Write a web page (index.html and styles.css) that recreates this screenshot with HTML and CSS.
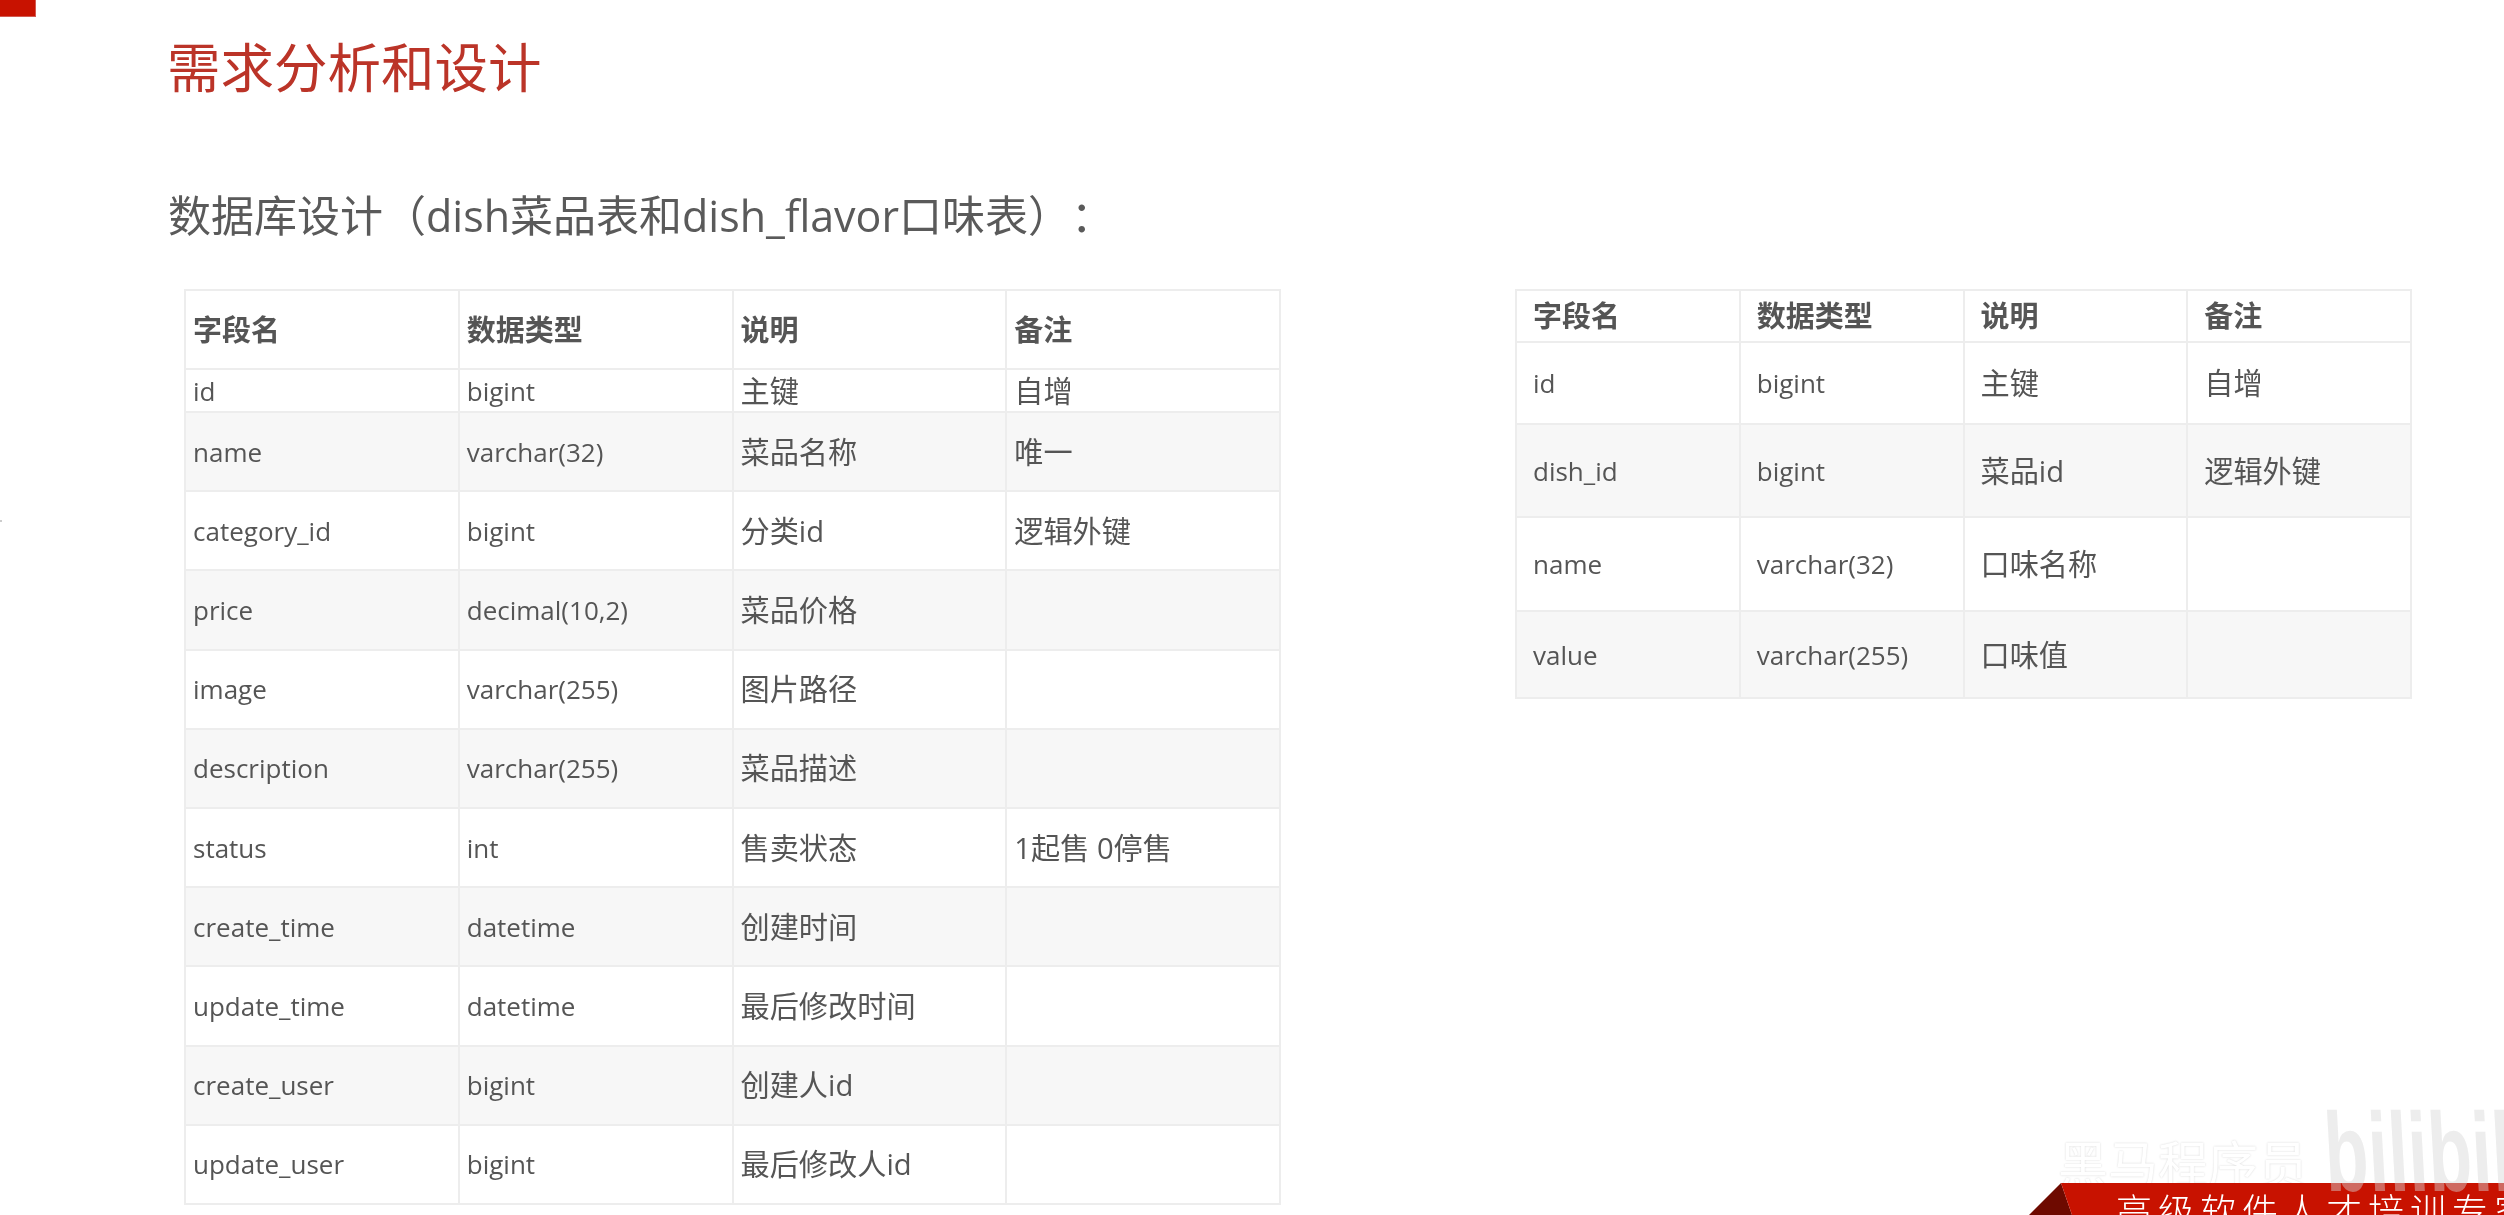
FILE: index.html
```html
<!DOCTYPE html>
<html lang="zh-CN">
<head>
<meta charset="utf-8">
<title>需求分析和设计</title>
<link rel="stylesheet" href="styles.css">
</head>
<body>
<div class="slide">
  <div class="corner"></div>
  <div class="edge-mark"></div>
  <h1 class="title">需求分析和设计</h1>
  <h2 class="subtitle">数据库设计（dish菜品表和dish_flavor口味表）<span class="colon">：</span></h2>
  <div class="tables">
    <table class="tbl tbl-dish">
      <thead>
        <tr><th>字段名</th><th>数据类型</th><th>说明</th><th>备注</th></tr>
      </thead>
      <tbody>
        <tr class="short"><td>id</td><td>bigint</td><td>主键</td><td>自增</td></tr>
        <tr><td>name</td><td>varchar(32)</td><td>菜品名称</td><td>唯一</td></tr>
        <tr><td>category_id</td><td>bigint</td><td>分类id</td><td>逻辑外键</td></tr>
        <tr><td>price</td><td>decimal(10,2)</td><td>菜品价格</td><td></td></tr>
        <tr><td>image</td><td>varchar(255)</td><td>图片路径</td><td></td></tr>
        <tr><td>description</td><td>varchar(255)</td><td>菜品描述</td><td></td></tr>
        <tr><td>status</td><td>int</td><td>售卖状态</td><td>1起售 0停售</td></tr>
        <tr><td>create_time</td><td>datetime</td><td>创建时间</td><td></td></tr>
        <tr><td>update_time</td><td>datetime</td><td>最后修改时间</td><td></td></tr>
        <tr><td>create_user</td><td>bigint</td><td>创建人id</td><td></td></tr>
        <tr><td>update_user</td><td>bigint</td><td>最后修改人id</td><td></td></tr>
      </tbody>
    </table>
    <table class="tbl tbl-flavor">
      <thead>
        <tr><th>字段名</th><th>数据类型</th><th>说明</th><th>备注</th></tr>
      </thead>
      <tbody>
        <tr class="r1"><td>id</td><td>bigint</td><td>主键</td><td>自增</td></tr>
        <tr class="r2"><td>dish_id</td><td>bigint</td><td>菜品id</td><td>逻辑外键</td></tr>
        <tr class="r3"><td>name</td><td>varchar(32)</td><td>口味名称</td><td></td></tr>
        <tr class="r4"><td>value</td><td>varchar(255)</td><td>口味值</td><td></td></tr>
      </tbody>
    </table>
  </div>
  <div class="mark-cn">黑马程序员</div>
  <div class="banner">
    <svg class="banner-art" viewBox="0 0 475 32" preserveAspectRatio="none" aria-hidden="true">
      <polygon class="fold" points="0,32 32,0 43,32"/>
      <polygon class="band" points="32,0 475,0 475,32 43,32"/>
    </svg>
    <span class="banner-text">高级软件人才培训专家</span>
  </div>
  <div class="mark-bili">bilibili</div>
</div>
</body>
</html>
```
FILE: styles.css
```css
* { box-sizing: border-box; }
html, body { margin: 0; padding: 0; background: #fff; }
.slide {
  position: relative;
  width: 2504px;
  height: 1215px;
  overflow: hidden;
  background: #fff;
  font-family: "Open Sans", "Noto Sans CJK SC", sans-serif;
  color: #555;
  text-spacing-trim: space-all;
  filter: blur(0.5px);
}
.corner {
  position: absolute;
  left: 0;
  top: 0;
  width: 36px;
  height: 17px;
  background: #c81200;
  border-right: 1px solid #d25a50;
  border-bottom: 1px solid #d25a50;
}
.edge-mark {
  position: absolute;
  left: 0;
  top: 520px;
  width: 2px;
  height: 2px;
  background: #ccc;
}
.title {
  margin: 0;
  padding: 36px 0 0 167px;
  font-size: 53.5px;
  line-height: 64px;
  font-weight: 400;
  color: #bb3428;
}
.subtitle {
  margin: 0;
  padding: 86px 0 0 168px;
  font-size: 43px;
  line-height: 54px;
  font-weight: 400;
  color: #5a5a5a;
  white-space: nowrap;
}
.colon { font-family: "Noto Sans CJK TC", sans-serif; }
.tables {
  display: flex;
  align-items: flex-start;
  gap: 234px;
  padding: 46px 0 0 184px;
}
.tbl {
  border-collapse: collapse;
  table-layout: fixed;
  font-size: 26px;
}
.tbl-dish { width: 1097px; }
.tbl-flavor { width: 897px; }
.tbl th, .tbl td {
  border: 2px solid #ededed;
  text-align: left;
  vertical-align: middle;
  white-space: nowrap;
  padding: 0 0 0 7px;
  font-weight: 400;
  line-height: 36px;
}
.tbl th {
  font-size: 29px;
  font-weight: 700;
  color: #555;
}
.tbl-flavor th, .tbl-flavor td { padding-left: 16px; }
.tbl-dish thead tr { height: 79px; }
.tbl-dish tbody tr { height: 79.2px; }
.tbl-dish tbody tr.short { height: 43px; }
.tbl-flavor thead tr { height: 52px; }
.tbl-flavor .r1 { height: 82px; }
.tbl-flavor .r2 { height: 93px; }
.tbl-flavor .r3 { height: 94px; }
.tbl-flavor .r4 { height: 87px; }
.tbl tbody tr:nth-child(even) td { background: #f7f7f7; }
.tbl td:nth-child(n+3) { font-size: 29.2px; }
.mark-cn {
  position: absolute;
  left: 2058px;
  top: 1136px;
  font-size: 50px;
  line-height: 56px;
  color: #fff;
  text-shadow: 0 0 2px #d4d4d4;
  white-space: nowrap;
}
.mark-bili {
  position: absolute;
  left: 2328px;
  top: 1088px;
  font-family: "Liberation Sans", sans-serif;
  font-size: 112px;
  line-height: 130px;
  font-weight: 700;
  color: rgba(215, 215, 215, 0.45);
  white-space: nowrap;
  transform-origin: left bottom;
  transform: scaleX(0.64) skewX(5deg);
}
.banner {
  position: absolute;
  left: 2029px;
  top: 1183px;
  width: 475px;
  height: 32px;
  overflow: hidden;
}
.banner-art { display: block; width: 100%; height: 100%; }
.fold { fill: #6e0a00; }
.band { fill: #c81200; }
.banner-text {
  position: absolute;
  left: 87px;
  top: 5px;
  font-family: "Noto Sans CJK SC", sans-serif;
  font-size: 36px;
  line-height: 42px;
  font-weight: 300;
  letter-spacing: 6px;
  color: #fff;
  white-space: nowrap;
}
```
